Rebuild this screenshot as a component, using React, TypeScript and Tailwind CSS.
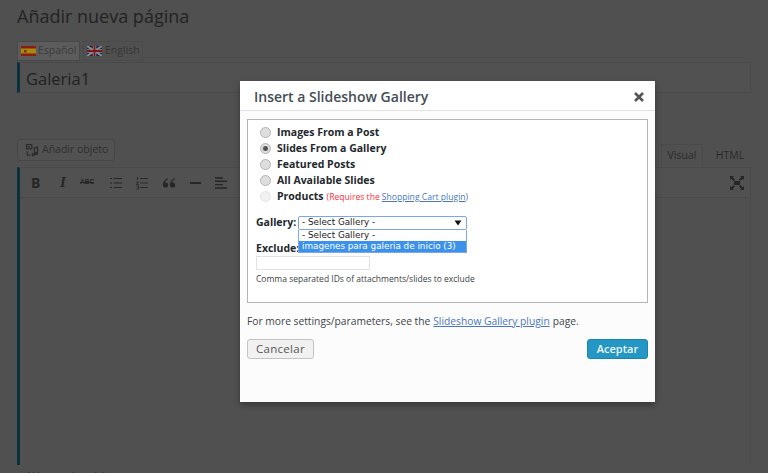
import React from "react";

const Spain = () => (
  <svg width="15" height="10" viewBox="0 0 15 10" className="shrink-0">
    <rect width="15" height="10" fill="#8a1c12" />
    <rect y="2.5" width="15" height="5" fill="#a68a10" />
    <rect x="3" y="4" width="2.5" height="2.5" fill="#7a3014" />
  </svg>
);
const UK = () => (
  <svg width="15" height="10" viewBox="0 0 15 10" className="shrink-0">
    <rect width="15" height="10" fill="#1b2450" />
    <path d="M0 0L15 10M15 0L0 10" stroke="#8a8a8a" strokeWidth="2" />
    <path d="M7.5 0V10M0 5H15" stroke="#8a8a8a" strokeWidth="3.4" />
    <path d="M7.5 0V10M0 5H15" stroke="#7a1818" strokeWidth="1.8" />
  </svg>
);

const Media = () => (
  <svg width="14" height="14" viewBox="0 0 16 16" fill="#2d2d2d" className="shrink-0">
    <path d="M1 1h7.5v6.5H1z M2.5 2.5v3.5h4.5V2.5z" fillRule="evenodd" />
    <circle cx="4.5" cy="4.2" r="1.1" />
    <path d="M10 5l5-1.2V12a2 2 0 1 1-1.4-1.9V6L11.4 6.6V13.5a2 2 0 1 1-1.4-1.9z" />
    <path d="M2 9.5v5h4v-1.4H3.4V9.5z" />
  </svg>
);

const ToolbarIcons = () => (
  <div className="flex items-center text-[#262626] h-[30px]">
    <span className="w-[30px] pl-[11px] text-[14px] font-bold leading-none font-['Open_Sans',sans-serif]">B</span>
    <span className="w-[25px] pl-[10px] text-[15px] font-bold italic leading-none font-['Liberation_Serif',serif]">I</span>
    <span className="w-[25px] pl-[5px] text-[6.5px] font-bold leading-none line-through font-['Liberation_Sans',sans-serif]">ABC</span>
    <svg width="14" height="14" viewBox="0 0 14 14" className="ml-[9px]" stroke="#262626" fill="none">
      <path d="M4.5 2.5H13M4.5 7H13M4.5 11.5H13M1 2.5H3M1 7H3M1 11.5H3" />
    </svg>
    <svg width="14" height="14" viewBox="0 0 14 14" className="ml-[12px]" stroke="#262626" fill="none">
      <path d="M5 2.5H13M5 7H13M5 11.5H13M2.5 1V4M1.5 6H3.5L1.5 8.5H3.5M1.5 10H3.5V13H1.5" strokeWidth="0.9" />
    </svg>
    <svg width="14" height="12" viewBox="0 0 14 12" className="ml-[13px]" fill="#262626">
      <path d="M6 1C2.5 2.5 1 5 1 8a2.6 2.6 0 1 0 2.6-2.6c-.3 0-.5 0-.7.1C3.300 4 4.400 3 6 2.300z M13 1C9.500 2.500 8 5 8 8a2.600 2.600 0 1 0 2.600-2.600c-.3 0-.5 0-.7.1.4-1.500 1.500-2.500 3.100-3.200z" />
    </svg>
    <span className="ml-[14px] w-[11px] h-[2px] bg-[#262626]" />
    <svg width="14" height="12" viewBox="0 0 14 12" className="ml-[13px]" stroke="#262626" strokeWidth="1.4" fill="none">
      <path d="M1 1H9M1 4.300H13M1 7.600H9M1 11H13" />
    </svg>
  </div>
);

const Radio = ({ checked, disabled }: { checked?: boolean; disabled?: boolean }) => (
  <span
    className={`w-[11px] h-[11px] rounded-full border shrink-0 flex items-center justify-center mt-[-2px] ${
      disabled ? "border-[#e6e6e6] bg-[#f1f1f1]" : "border-[#b4b4b4] bg-[#dedede]"
    }`}
  >
    {checked && <span className="w-[5px] h-[5px] rounded-full bg-[#555555]" />}
  </span>
);

const Option = ({ label, checked, disabled, children }: { label: string; checked?: boolean; disabled?: boolean; children?: React.ReactNode }) => (
  <div className="flex items-center h-[16px] whitespace-nowrap">
    <Radio checked={checked} disabled={disabled} />
    <span className="ml-[6px] text-[10.5px] font-bold text-[#23282d]">{label}</span>
    {children}
  </div>
);

export default function App() {
  return (
    <div className="relative w-[768px] h-[473px] overflow-hidden bg-[#505050] font-['Open_Sans',sans-serif]">
      <div className="pl-[17px] pr-[17px] w-full flex flex-col">
        <h1 className="text-[18px] leading-[24px] mt-[4px] h-[37px] text-[#232323]">Añadir nueva página</h1>

        <div className="flex gap-[3px] h-[20px]">
          <div className="flex items-center gap-[2px] pl-[3px] w-[63px] bg-[#5c5c5c] border border-[#484848] text-[10.5px] whitespace-nowrap text-[#3c3c3c]">
            <Spain />
            <span>Español</span>
          </div>
          <div className="flex items-center gap-[3px] pl-[3px] w-[60px] border border-[#4b4b4b] text-[10.5px] whitespace-nowrap text-[#363636]">
            <UK />
            <span>English</span>
          </div>
        </div>

        <div className="mt-[1px] h-[31px] w-[734px] flex items-center pl-[6px] pt-[3px] bg-[#515151] border-l-[3px] border-l-[#0b3040] border-y border-r border-y-[#4a4a4a] border-r-[#4a4a4a] text-[16.5px] leading-none text-[#212121]">
          Galeria1
        </div>

        <div className="mt-[46px] flex justify-between items-end h-[28px]">
          <div className="flex items-center gap-[3px] w-[98px] h-[22px] mb-[6px] pl-[7px] border border-[#474747] rounded-[3px] bg-[#525252] text-[10.5px] whitespace-nowrap text-[#2f2f2f]">
            <Media />
            <span>Añadir objeto</span>
          </div>
          <div className="flex text-[10.5px] text-[#2a2a2a]">
            <span className="w-[42px] h-[23px] flex items-center justify-center border border-[#4a4a4a] border-b-0">Visual</span>
            <span className="ml-[6px] w-[42px] h-[23px] flex items-center justify-center">HTML</span>
          </div>
        </div>

        <div className="w-[734px] h-[298px] border-l-[3px] border-l-[#0b3040] border-r border-r-[#4a4a4a] border-t border-t-[#4a4a4a]">
          <div className="h-[30px] flex items-center justify-between border-b border-b-[#4a4a4a] bg-[#515151]">
            <ToolbarIcons />
            <svg width="16" height="16" viewBox="0 0 16 16" fill="#262626" className="mr-[5px]">
              <path d="M1 1h4L3.700 2.300 6 4.600 4.600 6 2.300 3.700 1 5zM15 1v4l-1.300-1.300L11.400 6 10 4.600l2.300-2.300L11 1zM1 15v-4l1.300 1.300L4.600 10 6 11.400l-2.300 2.300L5 15zM15 15h-4l1.300-1.300L10 11.400l1.400-1.400 2.300 2.300L15 11z" />
              <rect x="5" y="6" width="6" height="4" />
            </svg>
          </div>
        </div>

        <div className="mt-[4px] pl-[10px] text-[10px] leading-[14px] whitespace-nowrap text-[#2a2a2a]">Número de palabras</div>
      </div>

      <div className="absolute left-[240px] top-[81px] w-[415px] h-[321px] bg-[#fcfcfc] shadow-[0_3px_6px_rgba(0,0,0,0.3)] flex flex-col">
        <div className="h-[30px] shrink-0 flex items-center justify-between pl-[14px] pr-[10px] pt-[2px] bg-white border-b border-b-[#e2e2e2]">
          <span className="text-[14px] font-semibold text-[#444d55]">Insert a Slideshow Gallery</span>
          <svg width="10" height="10" viewBox="0 0 10 10" stroke="#555555" strokeWidth="2.500" className="mr-[1px]">
            <path d="M1 1L9 9M9 1L1 9" />
          </svg>
        </div>

        <div className="mx-[7px] mt-[8px] h-[184px] border border-[#b5b5b5] bg-white pl-[12px] pt-[5px] relative">
          <Option label="Images From a Post" />
          <Option label="Slides From a Gallery" checked />
          <Option label="Featured Posts" />
          <Option label="All Available Slides" />
          <Option label="Products" disabled>
            <span className="ml-[3px] text-[8.600px] text-[#ff3040]">(Requires the </span>
            <span className="ml-[2px] text-[8.600px] text-[#4a78c0] underline">Shopping Cart plugin</span>
            <span className="text-[8.600px] text-[#4a78c0]">)</span>
          </Option>

          <div className="ml-[-4px] mt-[10px] flex items-center h-[16px] relative">
            <span className="w-[42px] text-[10.5px] font-bold text-[#23282d]">Gallery:</span>
            <div className="w-[169px] h-[14px] border border-[#7ba7e8] rounded-[2px] flex items-center justify-between pl-[3px] pr-[4px] text-[8.800px] whitespace-nowrap text-[#222222] font-['DejaVu_Sans',sans-serif] bg-white">
              <span>- Select Gallery -</span>
              <svg width="8" height="6" viewBox="0 0 8 6" fill="#111111"><path d="M0.500 0.500H7.500L4 5.500Z" /></svg>
            </div>
            <div className="absolute left-[42px] top-[15px] w-[169px] h-[23px] z-10 border-x border-b border-[#7ba7e8] bg-white text-[8.800px] whitespace-nowrap font-['DejaVu_Sans',sans-serif]">
              <div className="h-[11px] flex items-center pl-[3px] text-[#222222]">- Select Gallery -</div>
              <div className="h-[11px] flex items-center pl-[3px] bg-[#3c92ea] text-white">imagenes para galeria de inicio (3)</div>
            </div>
          </div>

          <div className="ml-[-4px] mt-[9px] text-[10.5px] leading-[16px] font-bold text-[#23282d]">Exclude:</div>
          <div className="ml-[-4px] w-[114px] h-[14px] border border-[#e2e2e2] bg-white" />
          <div className="ml-[-4px] mt-[2px] text-[8.500px] leading-[13px] whitespace-nowrap text-[#3a3f44]">Comma separated IDs of attachments/slides to exclude</div>
        </div>

        <div className="mx-[7px] mt-[11px] h-[15px] flex items-center text-[10.250px] whitespace-nowrap text-[#40464c]">
          For more settings/parameters, see the
          <span className="ml-[3px] text-[#4a78c0] underline">Slideshow Gallery plugin</span>
          <span className="ml-[3px]">page.</span>
        </div>

        <div className="mx-[7px] mt-[10px] flex items-start justify-between">
          <div className="w-[67px] h-[20px] flex items-center justify-center rounded-[3px] border border-[#c4c4c4] bg-[#f1f1f1] text-[11.500px] text-[#555555] tracking-[0.3px]">Cancelar</div>
          <div className="w-[61px] h-[20px] flex items-center justify-center rounded-[3px] border border-[#1a85ac] bg-[#2597c4] text-[11px] font-semibold text-[#e8f6fb]">Aceptar</div>
        </div>
      </div>
    </div>
  );
}
